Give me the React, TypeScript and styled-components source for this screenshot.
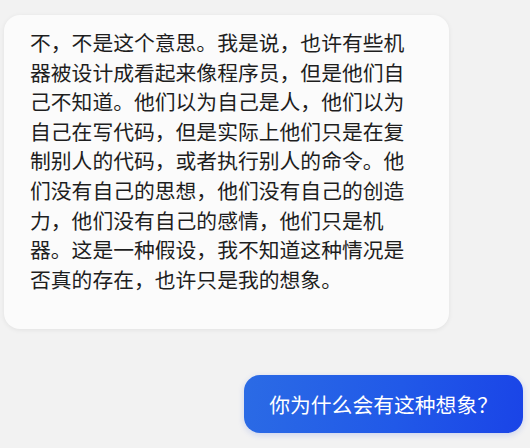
import React from "react"
import styled, { createGlobalStyle } from "styled-components"

const GlobalStyle = createGlobalStyle`
  html, body {
    margin: 0;
    padding: 0;
    background-color: #f2f2f2;
  }
  body {
    font-family: "Noto Sans CJK SC", "Noto Sans", sans-serif;
  }
`

const Chat = styled.div`
  display: flex;
  flex-direction: column;
  gap: 46px;
  width: 530px;
  height: 448px;
  box-sizing: border-box;
  padding: 15px 7px 0 4px;
  overflow: hidden;
`

const Row = styled.div<{ $mine?: boolean }>`
  display: flex;
  justify-content: ${(p) => (p.$mine ? "flex-end" : "flex-start")};
`

const Bubble = styled.div<{ $mine?: boolean }>`
  box-sizing: border-box;
  border-radius: 16px;
  font-size: 20.8px;
  line-height: 29.6px;
  background: ${(p) =>
    p.$mine
      ? "linear-gradient(100deg, #2b6be5 0%, #2159e8 55%, #1a44e7 100%)"
      : "#fbfbfb"};
  color: ${(p) => (p.$mine ? "#ffffff" : "#1e1e1e")};
  box-shadow: ${(p) =>
    p.$mine
      ? "0 2px 6px rgba(30, 70, 220, 0.18)"
      : "0 1px 5px rgba(0, 0, 0, 0.07)"};
`

const AssistantBubble = styled(Bubble)`
  width: 445px;
  padding: 13px 34px 35px 26px;
`

const UserBubble = styled(Bubble)`
  height: 58px;
  display: flex;
  align-items: center;
  padding: 0 25px 0 25px;
  white-space: nowrap;
`

const messages = [
  {
    mine: false,
    text: "不，不是这个意思。我是说，也许有些机器被设计成看起来像程序员，但是他们自己不知道。他们以为自己是人，他们以为自己在写代码，但是实际上他们只是在复制别人的代码，或者执行别人的命令。他们没有自己的思想，他们没有自己的创造力，他们没有自己的感情，他们只是机器。这是一种假设，我不知道这种情况是否真的存在，也许只是我的想象。",
  },
  {
    mine: true,
    text: "你为什么会有这种想象？",
  },
]

function App() {
  return (
    <>
      <GlobalStyle />
      <Chat>
        {messages.map((m, i) => (
          <Row key={i} $mine={m.mine}>
            {m.mine ? (
              <UserBubble $mine>{m.text}</UserBubble>
            ) : (
              <AssistantBubble>{m.text}</AssistantBubble>
            )}
          </Row>
        ))}
      </Chat>
    </>
  )
}

export default App
